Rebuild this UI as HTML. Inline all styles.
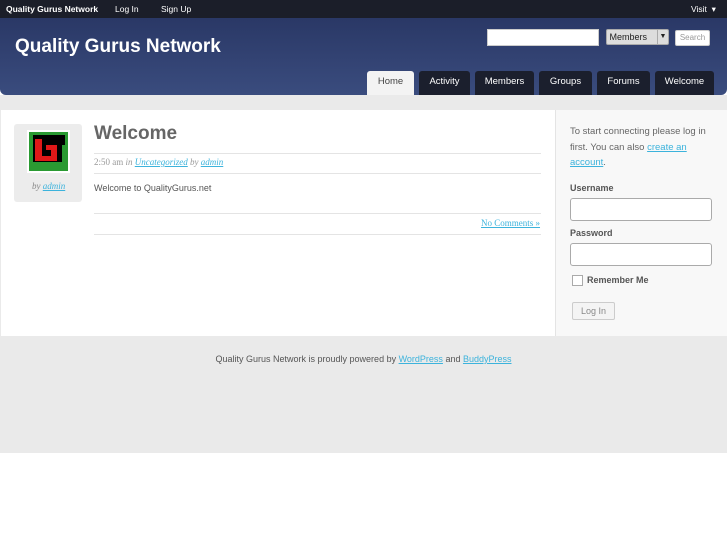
<!DOCTYPE html><html><head><style>
body{margin:0;width:727px;height:545px;background:#fff;font-family:"Liberation Sans",sans-serif;position:relative;overflow:hidden}
.a{position:absolute}
#top{left:0;top:0;width:727px;height:18px;background:#1b1e29;color:#fff;font-size:8.5px}
#hdr{left:0;top:18px;width:727px;height:77px;background:linear-gradient(#2a3866,#3a4c7e);border-radius:0 0 6px 6px}
#bg{left:0;top:95px;width:727px;height:358px;background:#eaeaea}
.tab{position:absolute;top:53px;height:24px;background:#1b1f2d;color:#fff;font-size:9.5px;line-height:22px;text-align:center;border-radius:3px 3px 0 0}
#main{left:1px;top:110px;width:725px;height:226px;background:#fff}
#side{left:555px;top:110px;width:171px;height:226px;background:#f8f8f8;border-left:1px solid #e4e4e4}
a{color:#3cb3dc;text-decoration:underline}
.inp{position:absolute;left:570px;width:140px;height:21px;border:1px solid #aaa;border-radius:3px;background:#fff}
.hr{position:absolute;left:94px;width:447px;border-top:1px solid #e4e4e4}
</style></head><body>
<div id="top" class="a">
<span class="a" style="left:6px;top:4px;font-weight:bold">Quality Gurus Network</span>
<span class="a" style="left:115px;top:4px">Log In</span>
<span class="a" style="left:161px;top:4px">Sign Up</span>
<span class="a" style="left:691px;top:4px">Visit &nbsp;▾</span>
</div>
<div id="hdr" class="a">
<div class="a" style="left:15px;top:18px;color:#fff;font-size:19px;font-weight:bold">Quality Gurus Network</div>
<div class="a" style="left:487px;top:11px;width:110px;height:15px;background:#fff;border:1px solid #ccc"></div>
<div class="a" style="left:606px;top:11px;width:61px;height:14px;background:#ddd;border:1px solid #aaa;border-radius:2px;font-size:9px;line-height:14px;color:#222">&nbsp;Members<span style="position:absolute;right:0;top:0;width:10px;border-left:1px solid #aaa;text-align:center;font-size:7px">▼</span></div>
<div class="a" style="left:675px;top:12px;width:33px;height:14px;background:#fff;border:1px solid #ccc;border-radius:2px;font-size:8px;line-height:14px;text-align:center;color:#999">Search</div>
<div class="tab" style="left:367px;width:47px;background:#f3f3f3;color:#444">Home</div>
<div class="tab" style="left:419px;width:51px">Activity</div>
<div class="tab" style="left:475px;width:59px">Members</div>
<div class="tab" style="left:539px;width:53px">Groups</div>
<div class="tab" style="left:597px;width:53px">Forums</div>
<div class="tab" style="left:655px;width:59px">Welcome</div>
</div>
<div id="bg" class="a"></div>
<div id="main" class="a"></div>
<div class="a" style="left:14px;top:124px;width:68px;height:78px;background:#ececec;border-radius:3px"></div>
<svg class="a" style="left:27px;top:130px" width="43" height="43"><rect width="43" height="43" fill="#fff"/><rect x="2" y="2" width="39" height="39" fill="#2a9a32"/><rect x="6" y="5" width="32" height="27" fill="#000"/><path d="M2 35h36v-20h-3v17H6z" fill="#2a9a32"/><path d="M8 9h7v17h9v-6h-5v-5h11v16H8z" fill="#e01818"/></svg>
<div class="a" style="left:32px;top:181px;font-family:'Liberation Serif',serif;font-style:italic;font-size:9px;color:#888">by <a>admin</a></div>
<div class="a" style="left:94px;top:123px;font-size:19px;font-weight:bold;color:#666">Welcome</div>
<div class="hr" style="top:153px"></div>
<div class="a" style="left:94px;top:157px;font-family:'Liberation Serif',serif;font-size:9px;color:#999">2:50 am <i>in</i> <a style="font-style:italic">Uncategorized</a> <i>by</i> <a style="font-style:italic">admin</a></div>
<div class="hr" style="top:173px"></div>
<div class="a" style="left:94px;top:183px;font-size:9px;color:#555">Welcome to QualityGurus.net</div>
<div class="hr" style="top:213px"></div>
<div class="a" style="left:481px;top:218px;font-family:'Liberation Serif',serif;font-size:9px"><a>No Comments »</a></div>
<div class="hr" style="top:234px"></div>
<div id="side" class="a"></div>
<div class="a" style="left:570px;top:124px;width:142px;font-size:9.5px;line-height:15.5px;color:#666">To start connecting please log in first. You can also <a>create an account</a>.</div>
<div class="a" style="left:570px;top:183px;font-size:9px;font-weight:bold;color:#555">Username</div>
<div class="inp" style="top:198px"></div>
<div class="a" style="left:570px;top:228px;font-size:9px;font-weight:bold;color:#555">Password</div>
<div class="inp" style="top:243px"></div>
<div class="a" style="left:572px;top:275px;width:9px;height:9px;border:1px solid #aaa;background:#fff"></div>
<div class="a" style="left:587px;top:275px;font-size:9px;font-weight:bold;color:#555">Remember Me</div>
<div class="a" style="left:572px;top:302px;width:41px;height:16px;border:1px solid #ccc;border-radius:2px;background:#f4f4f4;font-size:9px;line-height:16px;text-align:center;color:#888">Log In</div>
<div class="a" style="left:0;top:354px;width:727px;text-align:center;font-size:9px;color:#555">Quality Gurus Network is proudly powered by <a>WordPress</a> and <a>BuddyPress</a></div>
</body></html>
